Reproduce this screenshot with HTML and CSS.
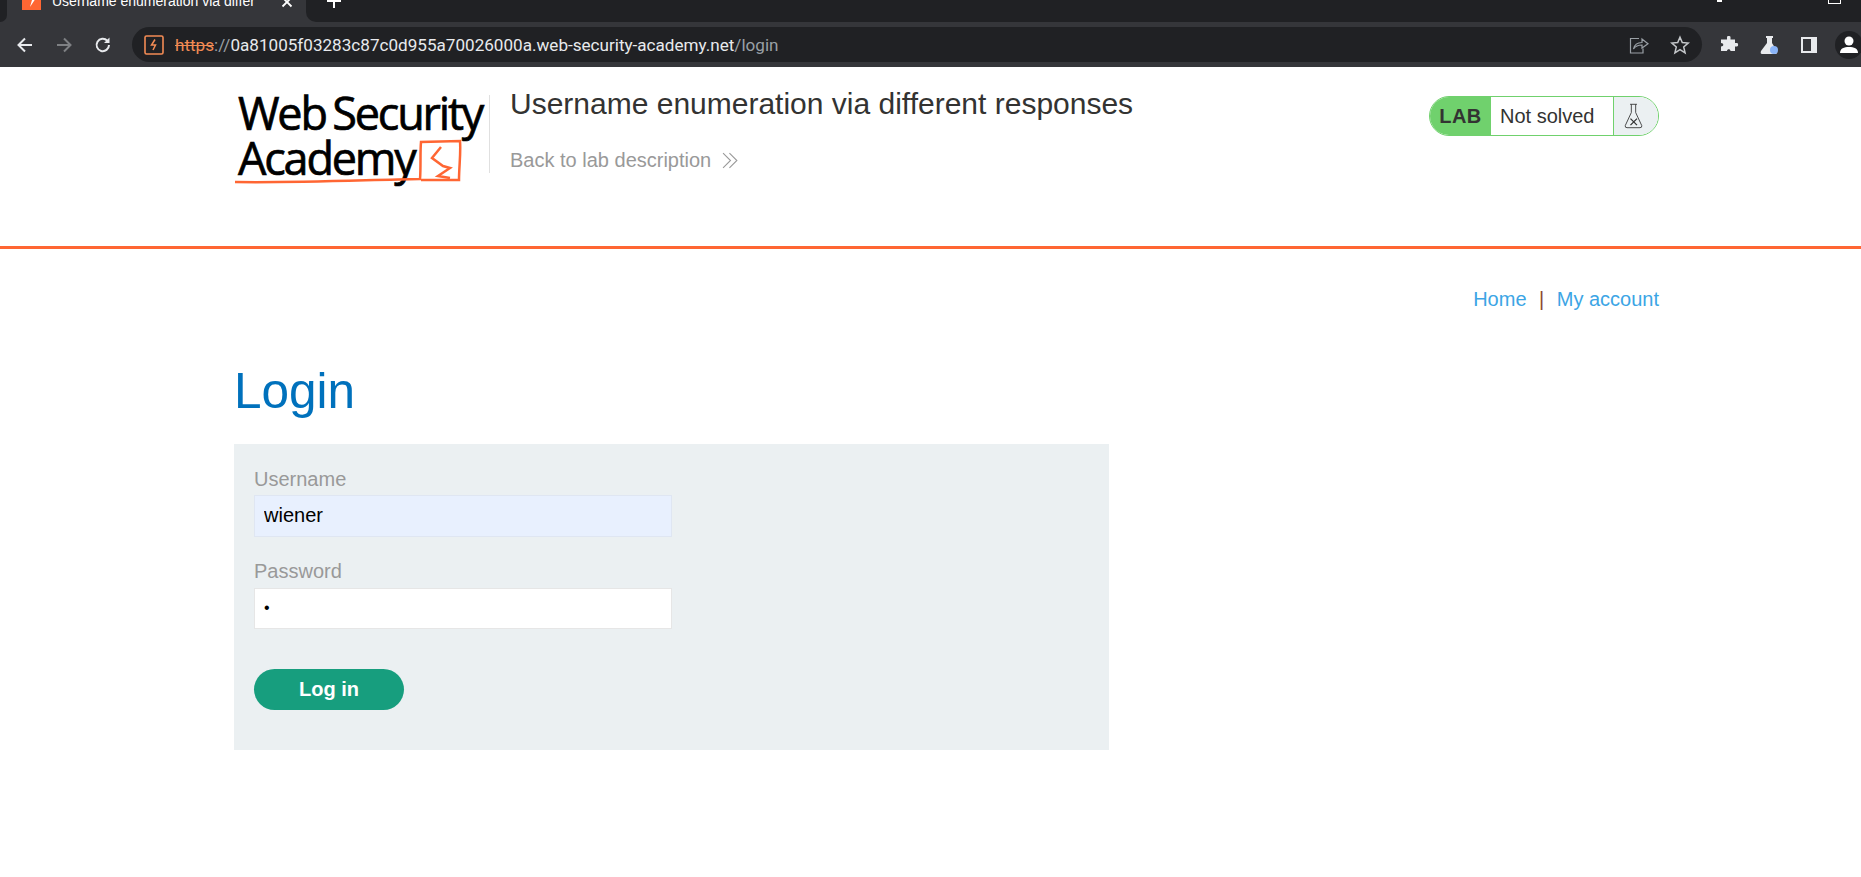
FILE: index.html
```html
<!DOCTYPE html>
<html>
<head>
    <title>Username enumeration via different responses</title>
    <link rel="stylesheet" href="styles.css">
</head>
<body>
    <!-- browser tabs -->
    <div class="tabstrip">
        <div class="strip-left"></div>
        <div class="tab">
            <svg class="tab-icon" width="19" height="19" viewBox="0 0 19 19"><rect width="19" height="19" fill="#ff6633"/><path d="M11 0 L6 9 H10 L8 16 L14 7 H10.500 L12.500 0Z" fill="#fff"/></svg>
            <span class="tab-title">Username enumeration via differ</span>
            <svg class="tab-close" width="12" height="12" viewBox="0 0 12 12"><path d="M1.500 1.500 L10.500 10.500 M10.500 1.500 L1.500 10.500" stroke="#fff" stroke-width="1.800"/></svg>
        </div>
        <div class="strip-right">
            <svg class="new-tab" width="16" height="16" viewBox="0 0 16 16"><path d="M8 0 V14 M1 7 H15" stroke="#fff" stroke-width="2"/></svg>
            <div class="window-btns">
                <span class="win-min"></span>
                <span class="win-max"></span>
            </div>
        </div>
    </div>

    <!-- toolbar -->
    <div class="toolbar">
        <div class="nav-btns">
            <svg width="20" height="20" viewBox="0 0 20 20"><path d="M17 10 H4 M10 3.500 L3.500 10 L10 16.500" fill="none" stroke="#e8eaed" stroke-width="2"/></svg>
            <svg width="20" height="20" viewBox="0 0 20 20"><path d="M3 10 H16 M10 3.500 L16.500 10 L10 16.500" fill="none" stroke="#7e8083" stroke-width="2"/></svg>
            <svg width="20" height="20" viewBox="0 0 20 20"><path d="M16 10 A6.200 6.200 0 1 1 14.300 5.700" fill="none" stroke="#e8eaed" stroke-width="2"/><path d="M16.500 2.500 V8 H11Z" fill="#e8eaed"/></svg>
        </div>
        <div class="omnibox">
            <svg class="lab-favicon" width="20" height="20" viewBox="0 0 20 20"><rect x="1" y="1" width="18" height="18" rx="1.500" fill="none" stroke="#f28b54" stroke-width="1.600"/><path d="M11 4.500 L7.500 10 H11.500 L9 15" fill="none" stroke="#f28b54" stroke-width="1.500"/></svg>
            <div class="url"><span class="url-https">https</span><span class="url-dim">://</span>0a81005f03283c87c0d955a70026000a.web-security-academy.net<span class="url-dim">/login</span></div>
            <svg class="omni-icon" width="20" height="20" viewBox="0 0 20 20"><path d="M10 3.500 H1.500 V18 H14 V13.500" fill="none" stroke="#9aa0a6" stroke-width="1.200"/><path d="M4.500 14 C5.500 9 9 7.500 13 7.500 V4 L19 8.800 L13 13 V10 C9.500 10 6.500 11 4.500 14Z" fill="none" stroke="#9aa0a6" stroke-width="1.200"/></svg>
            <svg class="omni-icon" width="20" height="20" viewBox="0 0 20 20"><path d="M10 2.200 L12.300 7.600 L18.200 8.100 L13.700 12 L15.100 17.800 L10 14.700 L4.900 17.800 L6.300 12 L1.800 8.100 L7.700 7.600Z" fill="none" stroke="#c4c7ca" stroke-width="1.500"/></svg>
        </div>
        <div class="ext-btns">
            <svg width="20" height="20" viewBox="0 0 20 20"><path d="M8 2 C8 .8 11.500 .8 11.500 2 V4.500 H16 V8 H18 C19.500 8 19.500 11.500 18 11.500 H16 V16 H11.500 C11.500 13.500 8 13.500 8 16 H2 V11.500 C5 11.500 5 8 2 8 V4.500 H8Z" fill="#e8eaed"/></svg>
            <svg width="20" height="20" viewBox="0 0 20 20"><path d="M7 1 H14 V3 H13 V8 L18 16 Q19 19 16 19 H3 Q1 19 2 16 L8 8 V3 H7Z" fill="#e8eaed"/><circle cx="15" cy="15" r="4" fill="#8ab4f8"/></svg>
            <svg width="20" height="20" viewBox="0 0 20 20"><rect x="2" y="2" width="16" height="16" fill="#e8eaed"/><rect x="4" y="4" width="8" height="12" fill="#35363a"/></svg>
            <div class="avatar">
                <svg width="22" height="22" viewBox="0 0 22 22"><circle cx="11" cy="7" r="4.500" fill="#fff"/><path d="M2 19 C2 14.500 6 13 11 13 C16 13 20 14.500 20 19Z" fill="#fff"/></svg>
            </div>
        </div>
    </div>

    <!-- lab header -->
    <div class="lab-header">
        <div class="container lab-banner">
            <div class="logo">
                <div class="logo-text">
                    <div>Web Security</div>
                    <div>Academy</div>
                </div>
                <svg class="logo-mark" width="255" height="90" viewBox="0 0 255 90"><path d="M1 87 C60 88 130 85 186 84 C187 72 186 58 187 47 L226 46 C227 58 225 72 225 85 L187 85" fill="none" stroke="#ff6633" stroke-width="2.500"/><path d="M207 52 L198 63 L209 71 L216 73 L204 81 L216 83" fill="none" stroke="#ff6633" stroke-width="2.500"/></svg>
            </div>
            <div class="lab-info">
                <h2 class="lab-title">Username enumeration via different responses</h2>
                <a class="back-link" href="#">Back to lab description
                    <svg width="17" height="17" viewBox="0 0 16 16"><path d="M1 1 L8 8 L1 15 M7 1 L14 8 L7 15" fill="none" stroke="#999" stroke-width="1"/></svg>
                </a>
            </div>
            <div class="lab-status">
                <span class="status-lab">LAB</span>
                <span class="status-text">Not solved</span>
                <span class="status-icon">
                    <svg width="21" height="26" viewBox="0 0 22 30"><path d="M7 1.500 H15 M8.500 1.500 V11 L1.500 26 Q1 28.500 3.500 28.500 H18.500 Q21 28.500 20.500 26 L13.500 11 V1.500" fill="none" stroke="#333" stroke-width="1"/><path d="M7.500 18 L15 25.500 M15 18 L7.500 25.500" stroke="#333" stroke-width="1.500"/></svg>
                </span>
            </div>
        </div>
    </div>

    <div class="container">
        <div class="top-links">
            <a href="#">Home</a>
            <span class="sep">|</span>
            <a href="#">My account</a>
        </div>

        <h1 class="page-title">Login</h1>

        <form class="login-form">
            <label for="username">Username</label>
            <input class="autofilled" id="username" type="text" value="wiener">
            <label for="password">Password</label>
            <input id="password" type="password" value="a">
            <button type="button">Log in</button>
        </form>
    </div>
</body>
</html>
```

FILE: styles.css
```css
/* page */
html, body {
    margin: 0;
    padding: 0;
}
body {
    background-color: #fff;
    font-family: "Liberation Sans", Arial, sans-serif;
    color: #333332;
    height: 877px;
    overflow: hidden;
}
.container {
    width: 1425px;
    margin-left: 234px;
    box-sizing: border-box;
}

/* browser tabs */
.tabstrip {
    display: flex;
    height: 22px;
    background-color: #35363a;
    color: #fff;
    overflow: hidden;
}
.strip-left {
    width: 7px;
    background-color: #202124;
    border-radius: 0 0 10px 0;
}
.tab {
    display: flex;
    align-items: flex-start;
    width: 299px;
    padding: 0 13px 0 15px;
    box-sizing: border-box;
    font-size: 14px;
}
.tab-icon {
    flex: none;
    margin: -9px 11px 0 0;
}
.tab-title {
    flex: 1;
    white-space: nowrap;
    overflow: hidden;
    margin-top: -9px;
    line-height: 20px;
}
.tab-close {
    flex: none;
    margin-top: -4px;
}
.strip-right {
    flex: 1;
    display: flex;
    align-items: flex-start;
    padding-left: 20px;
    background-color: #202124;
    border-radius: 0 0 0 10px;
}
.new-tab {
    margin-top: -6px;
}
.window-btns {
    display: flex;
    margin-left: auto;
}
.win-min {
    width: 5px;
    height: 2px;
    margin-right: 106px;
    background-color: #fff;
}
.win-max {
    width: 11px;
    height: 3px;
    margin-right: 20px;
    border: 1px solid #fff;
    border-top: none;
}

/* toolbar */
.toolbar {
    display: flex;
    align-items: center;
    height: 45px;
    background-color: #35363a;
    overflow: hidden;
}
.nav-btns {
    display: flex;
    flex: none;
    gap: 19px;
    width: 132px;
    padding-left: 15px;
    box-sizing: border-box;
}
.omnibox {
    display: flex;
    flex: none;
    align-items: center;
    width: 1570px;
    height: 35px;
    box-sizing: border-box;
    padding: 0 12px;
    background-color: #202124;
    border-radius: 18px;
}
.lab-favicon {
    flex: none;
    margin-right: 11px;
}
.url {
    flex: 1;
    font-family: Roboto, "Liberation Sans", sans-serif;
    font-size: 17.100px;
    color: #e8eaed;
    white-space: nowrap;
}
.url-https {
    color: #f28b54;
    text-decoration: line-through;
}
.url-dim {
    color: #9aa0a6;
}
.omni-icon {
    flex: none;
    margin-left: 21px;
}
.ext-btns {
    display: flex;
    flex: none;
    align-items: center;
    gap: 20px;
    margin-left: 17px;
}
.avatar {
    display: flex;
    align-items: center;
    justify-content: center;
    width: 28px;
    height: 28px;
    margin-left: -4px;
    border-radius: 50%;
    background-color: #202124;
}

/* lab header */
.lab-header {
    height: 179px;
    border-bottom: 3px solid #ff6633;
}
.lab-banner {
    display: flex;
    align-items: flex-start;
    padding-top: 19px;
}
.logo {
    position: relative;
    flex: none;
    width: 255px;
    height: 78px;
    margin-top: 9px;
    border-right: 1px solid #e0e0e0;
}
.logo-text {
    margin-top: -5px;
    padding-left: 4px;
    color: #000;
    font-family: "Open Sans", "Liberation Sans", sans-serif;
    font-size: 45px;
    line-height: 45px;
    letter-spacing: -2.200px;
    word-spacing: -3px;
    white-space: nowrap;
    -webkit-text-stroke: 0.700px #000;
}
.logo-mark {
    position: absolute;
    left: 0;
    top: 0;
}
.lab-info {
    flex: 1;
    padding-left: 20px;
}
.lab-title {
    margin: 0;
    font-size: 30px;
    font-weight: normal;
    line-height: 36px;
    color: #333332;
}
.back-link {
    display: flex;
    align-items: center;
    gap: 11px;
    margin-top: 26px;
    font-size: 20px;
    line-height: 24px;
    color: #999;
    text-decoration: none;
}
.lab-status {
    display: flex;
    flex: none;
    align-items: stretch;
    width: 230px;
    height: 40px;
    margin-top: 10px;
    box-sizing: border-box;
    border: 1px solid #70d16d;
    border-radius: 20px;
    overflow: hidden;
    font-size: 20px;
}
.status-lab {
    display: flex;
    align-items: center;
    justify-content: center;
    width: 61px;
    background-color: #70d16d;
    font-weight: bold;
    letter-spacing: .5px;
}
.status-text {
    display: flex;
    align-items: center;
    flex: 1;
    padding-left: 9px;
    background-color: #fff;
}
.status-icon {
    display: flex;
    align-items: center;
    justify-content: center;
    width: 45px;
    padding-right: 6px;
    box-sizing: border-box;
    border-left: 1px solid #70d16d;
    background-color: #ebf0f2;
}

/* links */
.top-links {
    display: flex;
    justify-content: flex-end;
    gap: 12.500px;
    padding-top: 38px;
    font-size: 20px;
    line-height: 24px;
}
.top-links a {
    color: #3ca5e5;
    text-decoration: none;
}
.sep {
    color: #8c4a2f;
}

/* login */
.page-title {
    margin: 50px 0 23px;
    font-size: 49.500px;
    font-weight: normal;
    line-height: 60px;
    color: #0071bc;
}
.login-form {
    display: flex;
    flex-direction: column;
    align-items: flex-start;
    width: 875px;
    height: 306px;
    padding: 23px 20px 20px;
    box-sizing: border-box;
    background-color: #ebf0f2;
}
.login-form label {
    font-size: 20px;
    line-height: 24px;
    color: #999;
}
.login-form input {
    width: 418px;
    height: 42px;
    margin: 4px 0 22px;
    padding: 0 9px 2px;
    box-sizing: border-box;
    border: 1px solid #e6e6e6;
    background-color: #fff;
    font-family: "Liberation Sans", Arial, sans-serif;
    font-size: 20px;
    color: #000;
    outline: none;
}
.login-form input[type="password"] {
    height: 41px;
    font-size: 16px;
    margin-top: 5px;
    margin-bottom: 0;
}
.login-form input.autofilled {
    background-color: #e8f0fe;
    border-color: #dfe6f2;
}
.login-form button {
    width: 150px;
    height: 41px;
    margin-top: 40px;
    padding: 0;
    border: none;
    border-radius: 21px;
    background-color: #179e7e;
    color: #fff;
    font-family: "Liberation Sans", Arial, sans-serif;
    font-size: 20px;
    font-weight: bold;
}
```
